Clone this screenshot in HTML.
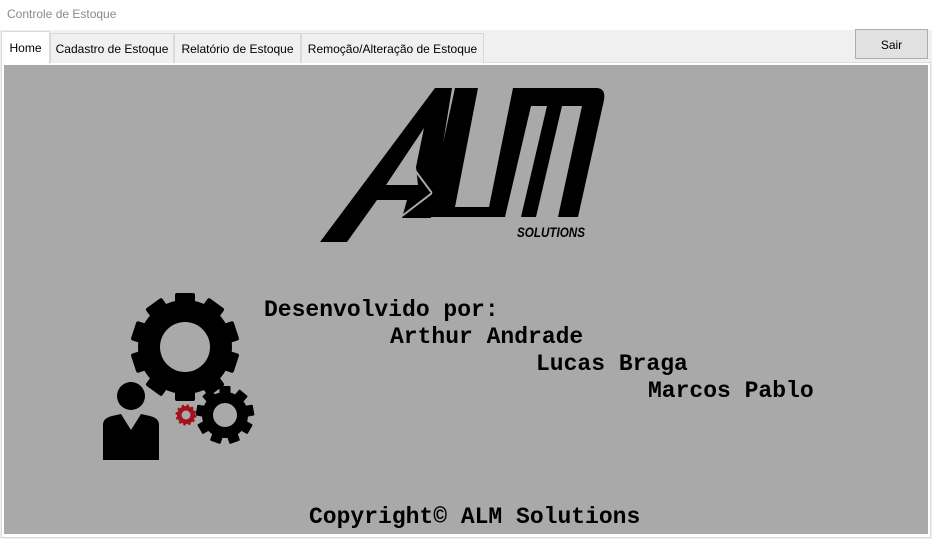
<!DOCTYPE html>
<html><head><meta charset="utf-8"><style>
*{margin:0;padding:0;box-sizing:border-box}
body{width:932px;height:539px;background:#f0f0f0;position:relative;overflow:hidden;font-family:"Liberation Sans",Arial,sans-serif}
.title{position:absolute;left:0;top:0;width:932px;height:30px;background:#fff;color:#8a8a8a;font-size:12px;padding:7px 0 0 7px}
.tab{position:absolute;top:33px;height:30px;border:1px solid #d9d9d9;border-bottom:none;background:#f0f0f0;font-size:12px;color:#000;padding-top:8px;text-align:center}
.tab.sel{background:#fff;top:31px;height:33px;padding-top:9px}
.panel{position:absolute;left:1px;top:62px;width:930px;height:476px;background:#fff;border:1px solid #dcdcdc}
.gray{position:absolute;left:4px;top:65px;width:924px;height:469px;background:#a9a9a9}
.btn{position:absolute;left:855px;top:29px;width:73px;height:30px;background:#e1e1e1;border:1px solid #adadad;font-size:12px;text-align:center;padding-top:8px}
.t{position:absolute;font-family:"Liberation Mono","Courier New",monospace;font-weight:bold;font-size:23px;color:#000;white-space:pre;line-height:1}
</style></head><body>
<div class="title">Controle de Estoque</div>
<div class="panel"></div>
<div class="gray"></div>
<div class="tab" style="left:50px;width:124px">Cadastro de Estoque</div>
<div class="tab" style="left:174px;width:127px">Relatório de Estoque</div>
<div class="tab" style="left:301px;width:183px">Remoção/Alteração de Estoque</div>
<div class="tab sel" style="left:1px;width:49px">Home</div>
<div class="btn">Sair</div>

<svg style="position:absolute;left:0;top:0" width="932" height="539">
<!-- A -->
<polygon points="320,242 347,242 377,200 407,200 402,218 431,218 452,88 435,88" fill="#000"/>
<polygon points="424,128 386,185 418,185 416,167" fill="#a9a9a9"/>
<polyline points="414,169 432,193 402,216" fill="none" stroke="#a9a9a9" stroke-width="2"/>
<!-- L -->
<polygon points="455,88 478,88 455,207 490,207 488,217 427,217" fill="#000"/>
<!-- M -->
<path d="M513,88 L596,88 Q606,88 604,100 L578,217 L558,217 L582,106 L562,106 L536,217 L521,217 L547,106 L531,106 L505,217 L487,217 Z" fill="#000"/>
<text x="517" y="237" font-family="Liberation Sans" font-weight="bold" font-style="italic" font-size="14" fill="#000" textLength="68" lengthAdjust="spacingAndGlyphs">SOLUTIONS</text>
<!-- big gear -->
<g transform="translate(185,347)" fill="#000">
<circle r="47"/>
<g id="t1"><rect x="-10" y="-54" width="20" height="14" rx="2"/></g>
<use href="#t1" transform="rotate(36)"/><use href="#t1" transform="rotate(72)"/><use href="#t1" transform="rotate(108)"/><use href="#t1" transform="rotate(144)"/><use href="#t1" transform="rotate(180)"/><use href="#t1" transform="rotate(216)"/><use href="#t1" transform="rotate(252)"/><use href="#t1" transform="rotate(288)"/><use href="#t1" transform="rotate(324)"/>
<circle r="25" fill="#a9a9a9"/>
</g>
<!-- small gear -->
<g transform="translate(225,415)" fill="#000">
<circle r="23"/>
<g id="t2"><rect x="-5.5" y="-29" width="11" height="8" rx="1"/></g>
<use href="#t2" transform="rotate(40)"/><use href="#t2" transform="rotate(80)"/><use href="#t2" transform="rotate(120)"/><use href="#t2" transform="rotate(160)"/><use href="#t2" transform="rotate(200)"/><use href="#t2" transform="rotate(240)"/><use href="#t2" transform="rotate(280)"/><use href="#t2" transform="rotate(320)"/>
<circle r="12" fill="#a9a9a9"/>
</g>
<!-- red gear -->
<g transform="translate(186,415)">
<circle r="9" fill="#a1121c"/>
<circle r="9.5" fill="none" stroke="#a1121c" stroke-width="2" stroke-dasharray="2.5 2.5"/>
<circle r="4.5" fill="#a9a9a9"/>
</g>
<!-- person -->
<circle cx="131" cy="396" r="14" fill="#000"/>
<path d="M103,460 L103,425 Q103,418 112,416 L121,414 L131,430 L141,414 L150,416 Q159,418 159,425 L159,460 Z" fill="#000"/>
</svg>

<div class="t" style="left:264px;top:299px">Desenvolvido por:</div>
<div class="t" style="left:390px;top:326px">Arthur Andrade</div>
<div class="t" style="left:536px;top:353px">Lucas Braga</div>
<div class="t" style="left:648px;top:380px">Marcos Pablo</div>
<div class="t" style="left:309px;top:506px">Copyright© ALM Solutions</div>
</body></html>
